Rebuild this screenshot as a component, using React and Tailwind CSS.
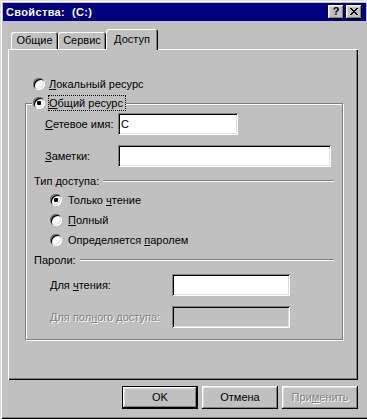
import React from "react";

const bevel =
  "shadow-[inset_-1px_-1px_#000,inset_1px_1px_#fff,inset_-2px_-2px_#808080,inset_2px_2px_#dfdfdf]";
const sunken =
  "shadow-[inset_1px_1px_#808080,inset_-1px_-1px_#fff,inset_2px_2px_#000,inset_-2px_-2px_#dfdfdf]";

const CloseGlyph = () => (
  <svg width="8" height="7" viewBox="0 0 8 7" shapeRendering="crispEdges">
    <path
      fill="#000"
      d="M0 0h2v1H0zM6 0h2v1H6zM1 1h2v1H1zM5 1h2v1H5zM2 2h4v1H2zM3 3h2v1H3zM2 4h4v1H2zM1 5h2v1H1zM5 5h2v1H5zM0 6h2v1H0zM6 6h2v1H6z"
    />
  </svg>
);

const Radio = ({ checked }) => (
  <span
    className={`flex h-[12px] w-[12px] shrink-0 items-center justify-center rounded-full bg-white ${sunken}`}
  >
    {checked && <span className="h-[4px] w-[4px] rounded-[1px] bg-black" />}
  </span>
);

const RadioOption = ({ checked, focused, gap, children }) => (
  <div className={`flex h-[16px] items-center ${gap}`}>
    <Radio checked={checked} />
    <span
      className={`flex h-[16px] items-center border pr-[2px] ${
        focused ? "border-dotted border-black" : "border-transparent"
      }`}
    >
      {children}
    </span>
  </div>
);

const TextBox = ({ width, value, disabled }) => (
  <div
    className={`flex h-[22px] items-center pl-[3px] ${width} ${
      disabled ? "bg-[#c0c0c0]" : "bg-white"
    } ${sunken}`}
  >
    {value}
  </div>
);

const Section = ({ children }) => (
  <div className="flex h-[16px] items-center gap-[4px] px-[8px]">
    <span>{children}</span>
    <div className="h-[2px] flex-1 border-t border-b border-t-[#808080] border-b-white" />
  </div>
);

const Tab = ({ className, children }) => (
  <div
    className={`flex items-center justify-center rounded-t-[3px] bg-[#c0c0c0] shadow-[inset_1px_1px_#fff,inset_-1px_0_#000,inset_-2px_0_#808080] ${className}`}
  >
    {children}
  </div>
);

const Button = ({ isDefault, disabled, children }) => (
  <div
    className={`h-[23px] w-[76px] ${isDefault ? "border border-black" : ""}`}
  >
    <div
      className={`flex h-full w-full items-center justify-center ${bevel} ${
        disabled ? "text-[#808080] [text-shadow:1px_1px_0_#fff]" : ""
      }`}
    >
      {children}
    </div>
  </div>
);

export default function App() {
  return (
    <div className="h-[419px] w-[367px] overflow-hidden bg-[#c0c0c0] pl-[3px] pr-[1px] pt-[3px] font-['Liberation_Sans',Arial,sans-serif] text-[11px] text-black shadow-[inset_1px_1px_#dfdfdf,inset_2px_2px_#fff,inset_0_-1px_#000,inset_0_-2px_#808080]">
      {/* title bar */}
      <div className="flex h-[18px] items-center bg-[#000080] pl-[3px] pr-[4px]">
        <span className="flex-1 font-bold tracking-[0.35px] text-white">Свойства:&nbsp; (C:)</span>
        <div className={`flex h-[14px] w-[16px] items-center justify-center bg-[#c0c0c0] pb-[1px] text-[11px] font-bold leading-none ${bevel}`}>
          ?
        </div>
        <div className={`ml-[2px] flex h-[14px] w-[16px] items-center justify-center bg-[#c0c0c0] pb-[1px] ${bevel}`}>
          <CloseGlyph />
        </div>
      </div>

      <div className="ml-[5px] mt-[8px]">
        {/* tabs */}
        <div className="flex h-[20px] items-start pl-[3px]">
          <Tab className="mt-[3px] h-[17px] w-[47px]">Общие</Tab>
          <Tab className="mt-[3px] h-[17px] w-[48px]">Сервис</Tab>
          <Tab className="relative z-10 h-[21px] w-[52px] pb-[1px]">Доступ</Tab>
        </div>

        {/* tab page */}
        <div className="h-[331px] w-[350px] pl-[17px] pt-[27px] shadow-[inset_1px_1px_#fff,inset_-1px_-1px_#000,inset_-2px_-2px_#808080]">
          <div className="ml-[8px]">
            <RadioOption gap="gap-[3px]">
              <span><u>Л</u>окальный ресурс</span>
            </RadioOption>
          </div>
          <div className="relative z-10 ml-[7px] mt-[3px] w-fit bg-[#c0c0c0] pl-[1px]">
            <RadioOption checked focused gap="gap-[3px]">
              <span><u>О</u>бщий ресурс</span>
            </RadioOption>
          </div>

          {/* group box */}
          <div className="-mt-[8px] h-[237px] w-[318px] border border-[#808080] pt-[9px] shadow-[inset_1px_1px_#fff,1px_1px_#fff]">
            <div className="flex h-[22px] items-center pl-[19px]">
              <span className="w-[73px]"><u>С</u>етевое имя:</span>
              <TextBox width="w-[120px]" value="C" />
            </div>
            <div className="mt-[10px] flex h-[22px] items-center pl-[19px]">
              <span className="w-[73px]"><u>З</u>аметки:</span>
              <TextBox width="w-[213px]" />
            </div>

            <div className="mt-[6px]">
              <Section>Тип доступа:</Section>
            </div>
            <div className="ml-[24px]">
              <div className="mt-[3px]">
                <RadioOption checked gap="gap-[5px]">
                  <span>Только <u>ч</u>тение</span>
                </RadioOption>
              </div>
              <div className="mt-[4px]">
                <RadioOption gap="gap-[5px]">
                  <span><u>П</u>олный</span>
                </RadioOption>
              </div>
              <div className="mt-[4px]">
                <RadioOption gap="gap-[5px]">
                  <span>Определяется <u>п</u>аролем</span>
                </RadioOption>
              </div>
            </div>

            <div className="mt-[4px]">
              <Section>Пароли:</Section>
            </div>
            <div className="mt-[6px] flex h-[22px] items-center pl-[24px]">
              <span className="w-[122px]">Для <u>ч</u>тения:</span>
              <TextBox width="w-[118px]" />
            </div>
            <div className="mt-[10px] flex h-[22px] items-center pl-[24px]">
              <span className="w-[122px] text-[#808080] [text-shadow:1px_1px_0_#fff]">
                Для пол<u>н</u>ого доступа:
              </span>
              <TextBox width="w-[118px]" disabled />
            </div>
          </div>
        </div>

        {/* buttons */}
        <div className="mt-[6px] flex w-[350px] justify-end gap-[4px]">
          <Button isDefault>OK</Button>
          <Button>Отмена</Button>
          <Button disabled>
            <span>При<u>м</u>енить</span>
          </Button>
        </div>
      </div>
    </div>
  );
}
